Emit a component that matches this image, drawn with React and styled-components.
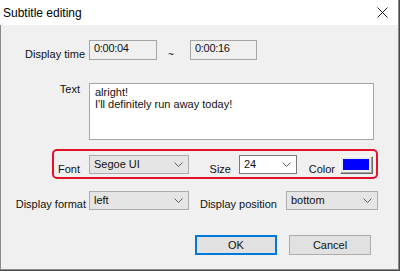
import React from 'react';
import styled, { createGlobalStyle } from 'styled-components';

const Global = createGlobalStyle`
  html, body { margin: 0; padding: 0; background: #4a4a4a; }
  body { width: 400px; height: 271px; overflow: hidden; }
  * { box-sizing: border-box; }
`;

const Window = styled.div`
  width: 399px;
  height: 270px;
  display: flex;
  flex-direction: column;
  font-family: "Liberation Sans", Arial, sans-serif;
  font-size: 11px;
  color: #111;
`;

const TitleBar = styled.div`
  height: 25px;
  flex: none;
  background: #fff;
  border-right: 1px solid #8a8a8a;
  display: flex;
  align-items: center;
  justify-content: space-between;
  padding: 0 10px 0 3px;
  font-size: 12px;
  color: #000;
`;

const Body = styled.div`
  flex: 1;
  background: #f0f0f0;
  border: 1px solid #8a8a8a;
  border-top: none;
  padding-top: 15px;
  display: flex;
  flex-direction: column;
`;

const Row = styled.div`
  display: flex;
  align-items: flex-start;
  margin-top: ${p => p.$mt || 0}px;
`;

const Label = styled.span`
  flex: none;
  width: ${p => p.$w}px;
  margin-right: ${p => p.$mr}px;
  padding-top: ${p => p.$pt || 0}px;
  text-align: right;
  line-height: 13px;
  white-space: nowrap;
`;

const TimeBox = styled.div`
  width: ${p => p.$w}px;
  height: 20px;
  background: #f0f0f0;
  border: 1px solid #a5a5a5;
  padding: 1px 0 0 4px;
  line-height: 13px;
  letter-spacing: -0.3px;
`;

const Tilde = styled.span`
  width: 33px;
  padding: 8px 0 0 11px;
  line-height: 13px;
  font-size: 10px;
`;

const TextArea = styled.div`
  width: 285px;
  height: 57px;
  background: #fff;
  border: 1px solid #a5a5a5;
  padding: 2px 5px;
  line-height: 12px;
  white-space: pre-line;
`;

const Group = styled.div`
  margin: 9px 0 0 51px;
  width: 326px;
  height: 30px;
  border: 2px solid #e2122a;
  border-radius: 5px;
  padding-top: 4px;
  display: flex;
  align-items: flex-start;
`;

const Combo = styled.div`
  flex: none;
  width: ${p => p.$w}px;
  height: 19px;
  background: ${p => (p.$editable ? '#fff' : '#e5e5e5')};
  border: 1px solid ${p => (p.$editable ? '#7a7a7a' : '#adadad')};
  display: flex;
  align-items: center;
  justify-content: space-between;
  padding: 0 5px 0 4px;
  line-height: 13px;
`;

const ColorButton = styled.div`
  flex: none;
  margin-top: 1px;
  width: 33px;
  height: 18px;
  border-top: 1px solid #fff;
  border-left: 1px solid #fff;
  border-right: 1px solid #6a6a6a;
  border-bottom: 1px solid #6a6a6a;
  box-shadow: inset -1px -1px 0 #a0a0a0, inset 1px 1px 0 #e3e3e3;
  padding: 2px 3px 3px 2px;
  background: #f0f0f0;
`;

const Swatch = styled.div`
  width: 100%;
  height: 100%;
  background: ${p => p.$color};
`;

const ButtonRow = styled.div`
  display: flex;
  gap: 12px;
  margin-top: 24px;
  padding-left: 194px;
`;

const Button = styled.div`
  width: 82px;
  height: 20px;
  display: flex;
  align-items: center;
  justify-content: center;
  background: #e1e1e1;
  border: 1px solid ${p => (p.$default ? '#0078d7' : '#adadad')};
  box-shadow: ${p => (p.$default ? 'inset 0 0 0 1px #0078d7' : 'none')};
`;

const Chevron = () => (
  <svg width="9" height="5" viewBox="0 0 9 5">
    <polyline points="0.5,0.5 4.5,4.5 8.5,0.5" fill="none" stroke="#606060" strokeWidth="1" />
  </svg>
);

const CloseIcon = () => (
  <svg width="11" height="11" viewBox="0 0 11 11">
    <path d="M0.5 0.5 L10.5 10.5 M10.5 0.5 L0.5 10.5" stroke="#222" strokeWidth="1" fill="none" />
  </svg>
);

export default function App() {
  return (
    <>
      <Global />
      <Window>
        <TitleBar>
          <span>Subtitle editing</span>
          <CloseIcon />
        </TitleBar>
        <Body>
          <Row>
            <Label $w={84} $mr={4} $pt={8}>Display time</Label>
            <TimeBox $w={68}>0:00:04</TimeBox>
            <Tilde>~</Tilde>
            <TimeBox $w={67}>0:00:16</TimeBox>
          </Row>
          <Row $mt={22}>
            <Label $w={79} $mr={9}>Text</Label>
            <TextArea>{'alright!\nI\'ll definitely run away today!'}</TextArea>
          </Row>
          <Group>
            <Label $w={26} $mr={9} $pt={8}>Font</Label>
            <Combo $w={100}>Segoe UI<Chevron /></Combo>
            <Label $w={42} $mr={8} $pt={8}>Size</Label>
            <Combo $w={58} $editable>24<Chevron /></Combo>
            <Label $w={38} $mr={5} $pt={8}>Color</Label>
            <ColorButton><Swatch $color="#0000ff" /></ColorButton>
          </Group>
          <Row $mt={12}>
            <Label $w={85} $mr={3} $pt={7}>Display format</Label>
            <Combo $w={100}>left<Chevron /></Combo>
            <Label $w={88} $mr={9} $pt={7}>Display position</Label>
            <Combo $w={92}>bottom<Chevron /></Combo>
          </Row>
          <ButtonRow>
            <Button $default>OK</Button>
            <Button>Cancel</Button>
          </ButtonRow>
        </Body>
      </Window>
    </>
  );
}
